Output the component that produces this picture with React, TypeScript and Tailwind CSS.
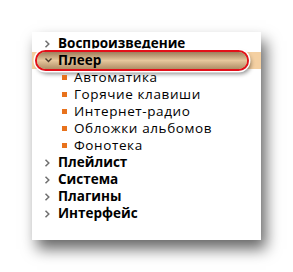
import React from "react";

const Arrow = ({ open }: { open?: boolean }) =>
  open ? (
    <svg width="7" height="7" viewBox="0 0 7 7" className="block">
      <path d="M0.5 1.5 L3.5 4.5 L6.5 1.5" fill="none" stroke="#4a3a2a" strokeWidth="1.4" />
    </svg>
  ) : (
    <svg width="7" height="8" viewBox="0 0 7 8" className="block">
      <path d="M1.5 0.8 L4.8 4 L1.5 7.2" fill="none" stroke="#707070" strokeWidth="1.5" />
    </svg>
  );

const Parent = ({ label }: { label: string }) => (
  <div className="flex h-[17px] items-center">
    <div className="flex w-[26px] justify-end pr-[7px]">
      <Arrow />
    </div>
    <span className="text-[13.5px] font-bold text-black leading-none">{label}</span>
  </div>
);

const OpenParent = ({ label }: { label: string }) => (
  <div className="flex h-[17px] items-center bg-[#f4d0a2]">
    <div className="-my-[2px] ml-[3px] h-[21px] w-[214px] shrink-0 rounded-full border-[2.5px] border-[#e3101a] shadow-[0_0_0_1.5px_white,2px_3px_4px_rgba(0,0,0,0.45)]">
      <div className="flex h-full w-full items-center rounded-full bg-gradient-to-b from-[#9e7e5c] via-[#e6c79d] to-[#b08e66] pl-[8px]">
        <Arrow open />
        <span className="ml-[6px] text-[13.5px] font-bold leading-none text-black">{label}</span>
      </div>
    </div>
  </div>
);

const Child = ({ label }: { label: string }) => (
  <div className="flex h-[17px] items-center">
    <div className="ml-[30px] mr-[7px] h-[5px] w-[5px] bg-[#e8721c]" />
    <span className="text-[13.5px] text-black leading-none tracking-[0.6px]">{label}</span>
  </div>
);

export default function App() {
  return (
    <div
      className="relative h-[272px] w-[293px] overflow-hidden bg-white pl-[32px] pt-[32px]"
      style={{ fontFamily: '"Open Sans", "Noto Sans", sans-serif' }}
    >
      <div className="relative h-[208px] w-[229px] bg-white pt-[3px] shadow-[5px_9px_14px_rgba(0,0,0,0.6)]">
        <Parent label="Воспроизведение" />
        <OpenParent label="Плеер" />
        <Child label="Автоматика" />
        <Child label="Горячие клавиши" />
        <Child label="Интернет-радио" />
        <Child label="Обложки альбомов" />
        <Child label="Фонотека" />
        <Parent label="Плейлист" />
        <Parent label="Система" />
        <Parent label="Плагины" />
        <Parent label="Интерфейс" />
      </div>
    </div>
  );
}
